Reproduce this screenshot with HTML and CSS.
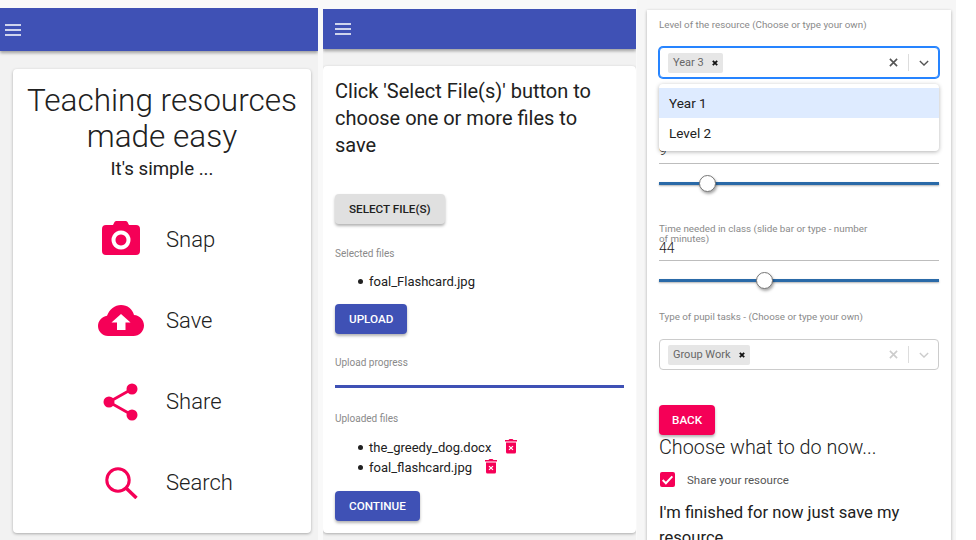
FILE: index.html
```html
<!DOCTYPE html>
<html lang="en">

<head>
    <meta charset="UTF-8">
    <title>Teaching resources</title>
    <link rel="stylesheet" href="styles.css">
</head>

<body>
    <div class="strip">
        <!-- home screen -->
        <section class="phone phone-home">
            <header class="app-bar">
                <svg class="menu-icon" viewBox="0 0 16 12"><path d="M0 1h16M0 6h16M0 11h16" /></svg>
            </header>
            <div class="card home-card">
                <h1 class="home-title">Teaching resources made easy</h1>
                <p class="home-sub">It's simple ...</p>
                <ul class="feature-list">
                    <li class="feature">
                        <span class="feature-icon icon-snap">
                            <svg width="38" height="34" viewBox="0 0 38 34"><path fill-rule="evenodd" d="M11 4l1.500-3q.6-1 2-1h9q1.400 0 2 1L27 4h7q4 0 4 4v22q0 4-4 4H4q-4 0-4-4V8q0-4 4-4zM19 9.500a9.500 9.500 0 1 0 .01 0zM19 13.500a5.500 5.500 0 1 1-.01 0z" /></svg>
                        </span>
                        <span>Snap</span>
                    </li>
                    <li class="feature">
                        <span class="feature-icon">
                            <svg width="46" height="31" viewBox="0 0 46 31"><path fill-rule="evenodd" d="M23 0c6.500 0 11.500 4 13 10 5.500.5 10 4.800 10 10.500C46 26.300 41.300 31 35.500 31H10C4.500 31 0 26.500 0 21c0-5.200 4-9.500 9-10.300C11.500 4.300 16.800 0 23 0zM23 9l-9.500 8.500H19V25h8.500v-7.500h5z" /></svg>
                        </span>
                        <span>Save</span>
                    </li>
                    <li class="feature">
                        <span class="feature-icon">
                            <svg width="36" height="38" viewBox="0 0 36 38"><g fill="#f50057"><circle cx="29" cy="6" r="5.500" /><circle cx="6" cy="19" r="5.500" /><circle cx="29" cy="32" r="5.500" /></g><path d="M29 6L6 19l23 13" fill="none" stroke="#f50057" stroke-width="2.800" /></svg>
                        </span>
                        <span>Share</span>
                    </li>
                    <li class="feature">
                        <span class="feature-icon">
                            <svg width="33" height="32" viewBox="0 0 33 32"><circle cx="13" cy="13" r="11.200" fill="none" stroke="#f50057" stroke-width="3" /><path d="M21 21l10.500 10" stroke="#f50057" stroke-width="3.500" fill="none" /></svg>
                        </span>
                        <span>Search</span>
                    </li>
                </ul>
            </div>
        </section>

        <!-- upload screen -->
        <section class="phone phone-upload">
            <header class="app-bar">
                <svg class="menu-icon" viewBox="0 0 16 12"><path d="M0 1h16M0 6h16M0 11h16" /></svg>
            </header>
            <div class="card upload-card">
                <h2 class="upload-title">Click 'Select File(s)' button to choose one or more files to save</h2>
                <button class="btn btn-grey btn-select">SELECT FILE(S)</button>
                <p class="caption caption-selected">Selected files</p>
                <ul class="file-list file-list-selected">
                    <li>foal_Flashcard.jpg</li>
                </ul>
                <button class="btn btn-blue">UPLOAD</button>
                <p class="caption caption-progress">Upload progress</p>
                <div class="progress-bar"></div>
                <p class="caption caption-uploaded">Uploaded files</p>
                <ul class="file-list file-list-uploaded">
                    <li>the_greedy_dog.docx
                        <svg class="trash-icon" viewBox="0 0 12 15"><path fill-rule="evenodd" d="M0 1.500h3.500L4.500.5h3l1 1H12V3H0zM1 4h10v9.500q0 1.500-1.500 1.500h-7Q1 15 1 13.500zM4.400 7.200L3.600 8l1.600 1.500-1.600 1.500.8.800L6 10.300l1.600 1.500.8-.8-1.600-1.500L8.400 8l-.8-.8L6 8.700z" /></svg>
                    </li>
                    <li>foal_flashcard.jpg
                        <svg class="trash-icon" viewBox="0 0 12 15"><path fill-rule="evenodd" d="M0 1.500h3.500L4.500.5h3l1 1H12V3H0zM1 4h10v9.500q0 1.500-1.500 1.500h-7Q1 15 1 13.500zM4.400 7.200L3.600 8l1.600 1.500-1.600 1.500.8.800L6 10.300l1.600 1.500.8-.8-1.600-1.500L8.400 8l-.8-.8L6 8.700z" /></svg>
                    </li>
                </ul>
                <button class="btn btn-blue">CONTINUE</button>
            </div>
        </section>

        <!-- details screen, runs off the bottom -->
        <section class="phone phone-details">
            <div class="card details-card">
                <p class="caption caption-level">Level of the resource (Choose or type your own)</p>
                <div class="select-wrap">
                    <div class="select select-focus">
                        <span class="chip">Year 3
                            <svg class="chip-x" viewBox="0 0 6 6"><path d="M.8.8l4.400 4.400M5.200.8L.8 5.200" /></svg>
                        </span>
                        <svg class="select-clear" viewBox="0 0 10 10"><path d="M1 1l8 8M9 1l-8 8" /></svg>
                        <span class="select-sep"></span>
                        <svg class="select-arrow" viewBox="0 0 12 7"><path d="M1 1l5 5 5-5" /></svg>
                    </div>
                    <div class="select-menu">
                        <div class="select-option select-option-on">Year 1</div>
                        <div class="select-option">Level 2</div>
                    </div>
                </div>
                <div class="number-field number-first">9</div>
                <div class="slider">
                    <span class="slider-thumb thumb-first"></span>
                </div>
                <div class="time-field">
                    <p class="caption caption-time">Time needed in class (slide bar or type - number of minutes)</p>
                    <div class="number-field number-time">44</div>
                </div>
                <div class="slider">
                    <span class="slider-thumb thumb-second"></span>
                </div>
                <p class="caption caption-tasks">Type of pupil tasks - (Choose or type your own)</p>
                <div class="select select-idle">
                    <span class="chip">Group Work
                        <svg class="chip-x" viewBox="0 0 6 6"><path d="M.8.8l4.400 4.400M5.200.8L.8 5.200" /></svg>
                    </span>
                    <svg class="select-clear" viewBox="0 0 10 10"><path d="M1 1l8 8M9 1l-8 8" /></svg>
                    <span class="select-sep"></span>
                    <svg class="select-arrow" viewBox="0 0 12 7"><path d="M1 1l5 5 5-5" /></svg>
                </div>
                <button class="btn btn-pink">BACK</button>
                <h3 class="choose-title">Choose what to do now...</h3>
                <label class="check-row">
                    <span class="check-box">
                        <svg viewBox="0 0 14 14"><path d="M2.500 7.500l3 3 6-6.500" /></svg>
                    </span>
                    Share your resource
                </label>
                <h4 class="finish-title">I'm finished for now just save my resource</h4>
            </div>
        </section>
    </div>
</body>

</html>
```

FILE: styles.css
```css
* {
    box-sizing: border-box;
}

html,
body {
    height: 540px;
    margin: 0;
    overflow: hidden;
}

body {
    background-color: #fff;
    color: #212121;
    font-family: Roboto, "Liberation Sans", sans-serif;
}

.strip {
    display: flex;
    width: 956px;
    height: 540px;
    background-color: #f9f9f9;
}

.phone {
    flex: none;
    overflow: hidden;
    background-color: #f2f2f2;
}

.phone-home {
    width: 318px;
    margin-top: 8px;
}

.phone-upload {
    width: 313px;
    margin: 9px 0 0 5px;
}

.phone-details {
    width: 319px;
    margin-left: 1px;
    padding: 10px 5px 0 10px;
    background-color: #f6f6f6;
}

.app-bar {
    display: flex;
    align-items: center;
    height: 43px;
    padding-left: 5px;
    background-color: #3f51b5;
    box-shadow: 0 2px 3px rgba(0, 0, 0, 0.35);
}

.phone-upload .app-bar {
    height: 40px;
    padding-left: 12px;
}

.menu-icon {
    width: 16px;
    height: 12px;
    fill: none;
    stroke: #fff;
    stroke-width: 1.600;
}

.card {
    background-color: #fff;
    border-radius: 4px;
    box-shadow: 0 1px 3px rgba(0, 0, 0, 0.3);
}

.home-card {
    height: 464px;
    margin: 18px 7px 0 13px;
    padding-top: 14px;
    text-align: center;
}

.home-title {
    margin: 0;
    font-size: 31.500px;
    font-weight: 300;
    line-height: 36px;
}

.home-sub {
    margin: 1px 0 0;
    font-size: 18.700px;
    font-weight: 400;
    line-height: 26px;
}

.feature-list {
    margin: 17px 0 0;
    padding: 0;
    list-style: none;
}

.feature {
    display: flex;
    align-items: center;
    gap: 21px;
    height: 81px;
    padding-left: 84px;
    font-size: 22px;
    font-weight: 300;
    text-align: left;
}

.feature-icon {
    display: flex;
    justify-content: center;
    width: 48px;
    fill: #f50057;
}

.icon-snap {
    margin-bottom: 4px;
}

.upload-card {
    height: 467px;
    margin-top: 17px;
    padding: 12px 12px 0 12px;
}

.upload-title {
    max-width: 270px;
    margin: 0;
    font-size: 20px;
    font-weight: 400;
    line-height: 27px;
}

.btn {
    display: block;
    height: 30px;
    padding: 0 14px;
    border: none;
    border-radius: 4px;
    font-family: inherit;
    font-size: 11.700px;
    font-weight: 500;
    box-shadow: 0 2px 3px rgba(0, 0, 0, 0.3);
}

.btn-grey {
    background-color: #e0e0e0;
    color: #212121;
}

.btn-blue {
    background-color: #3f51b5;
    color: #fff;
}

.btn-pink {
    margin-top: 35px;
    padding: 0 13px;
    background-color: #f50057;
    color: #fff;
}

.btn-select {
    margin-top: 35px;
}

.caption {
    margin: 0;
    color: #8a8a8a;
    font-size: 10px;
    line-height: 12px;
}

.details-card .caption {
    font-size: 9.800px;
}

.caption-selected {
    margin-top: 24px;
}

.file-list {
    margin: 0;
    padding-left: 34px;
    list-style: none;
    font-size: 13px;
    font-weight: 400;
    line-height: 20px;
}

/* bigger dot than the default marker */
.file-list li::before {
    content: "";
    display: inline-block;
    width: 5px;
    height: 5px;
    margin: 0 6.500px 0 -11.500px;
    background-color: #212121;
    border-radius: 50%;
    vertical-align: 2px;
}

.file-list-selected {
    margin: 12px 0 12px;
}

.caption-progress {
    margin-top: 23px;
}

.progress-bar {
    height: 3px;
    margin-top: 16px;
    background-color: #3f51b5;
}

.caption-uploaded {
    margin-top: 25px;
}

.file-list-uploaded {
    margin: 13px 0 13px;
}

.trash-icon {
    width: 12px;
    height: 16px;
    margin: -5px 0 0 10px;
    fill: #f50057;
    vertical-align: -2px;
}

.details-card {
    height: 560px;
    padding: 9px 12px 0;
    border-radius: 0;
}

.select-wrap {
    position: relative;
    margin-top: 16px;
}

.select {
    display: flex;
    align-items: center;
    height: 31px;
    padding-left: 8px;
    background-color: #fff;
    border: 1px solid #ccc;
    border-radius: 4px;
}

.select-focus {
    border: 1px solid #2684ff;
    box-shadow: 0 0 0 1px #2684ff;
}

.chip {
    display: flex;
    align-items: center;
    height: 20px;
    padding: 0 5px;
    background-color: #e6e6e6;
    border-radius: 2px;
    color: #666;
    font-size: 11px;
    font-weight: 400;
}

.chip-x {
    width: 6px;
    height: 6px;
    margin-left: 8px;
    fill: none;
    stroke: #111;
    stroke-width: 1.800;
}

.select-clear {
    width: 9px;
    height: 9px;
    margin-left: auto;
    fill: none;
    stroke: #555;
    stroke-width: 1.800;
}

.select-sep {
    width: 1px;
    height: 17px;
    margin: 0 10px;
    background-color: #ddd;
}

.select-arrow {
    width: 10px;
    height: 6px;
    margin-right: 9px;
    fill: none;
    stroke: #555;
    stroke-width: 1.600;
}

.select-idle {
    margin-top: 16px;
}

.select-idle .select-clear,
.select-idle .select-arrow {
    stroke: #ccc;
}

.select-menu {
    position: absolute;
    top: 37px;
    left: 0;
    z-index: 2;
    width: 100%;
    padding: 4px 0 3px;
    background-color: #fff;
    border-radius: 4px;
    box-shadow: 0 1px 4px rgba(0, 0, 0, 0.3);
}

.select-option {
    height: 30px;
    padding-left: 10px;
    font-size: 13.500px;
    font-weight: 400;
    line-height: 30px;
}

.select-option-on {
    background-color: #deebff;
}

.number-field {
    border-bottom: 1px solid #bdbdbd;
    font-size: 14px;
    font-weight: 300;
    line-height: 16px;
}

.number-first {
    height: 28px;
    margin-top: 58px;
    padding-top: 6px;
}

.slider {
    position: relative;
    height: 3px;
    margin-top: 18px;
    background-color: #2a6aa8;
    box-shadow: 0 1px 2px rgba(0, 0, 0, 0.3);
}

.slider-thumb {
    position: absolute;
    top: -7px;
    width: 17px;
    height: 17px;
    background-color: #fff;
    border: 1px solid #777;
    border-radius: 50%;
    box-shadow: 1px 2px 3px rgba(0, 0, 0, 0.35);
}

.thumb-first {
    left: 40px;
}

.thumb-second {
    left: 97px;
}

.time-field {
    margin-top: 39px;
}

.caption-time {
    width: 212px;
    line-height: 10px;
}

.number-time {
    height: 21px;
    margin-top: -4px;
}

.caption-tasks {
    margin-top: 29px;
}

.choose-title {
    margin: 1px 0 0;
    font-size: 19.800px;
    font-weight: 300;
    line-height: 24px;
}

.check-row {
    display: flex;
    align-items: center;
    gap: 12px;
    margin: 12px 0 0 1px;
    color: #555;
    font-size: 11.500px;
    font-weight: 400;
}

.check-box {
    display: block;
    width: 15px;
    height: 15px;
    background-color: #f50057;
    border-radius: 2px;
}

.check-box svg {
    display: block;
    fill: none;
    stroke: #fff;
    stroke-width: 1.800;
}

.finish-title {
    margin: 13px 0 0;
    font-size: 16.600px;
    font-weight: 400;
    line-height: 25px;
}
```
